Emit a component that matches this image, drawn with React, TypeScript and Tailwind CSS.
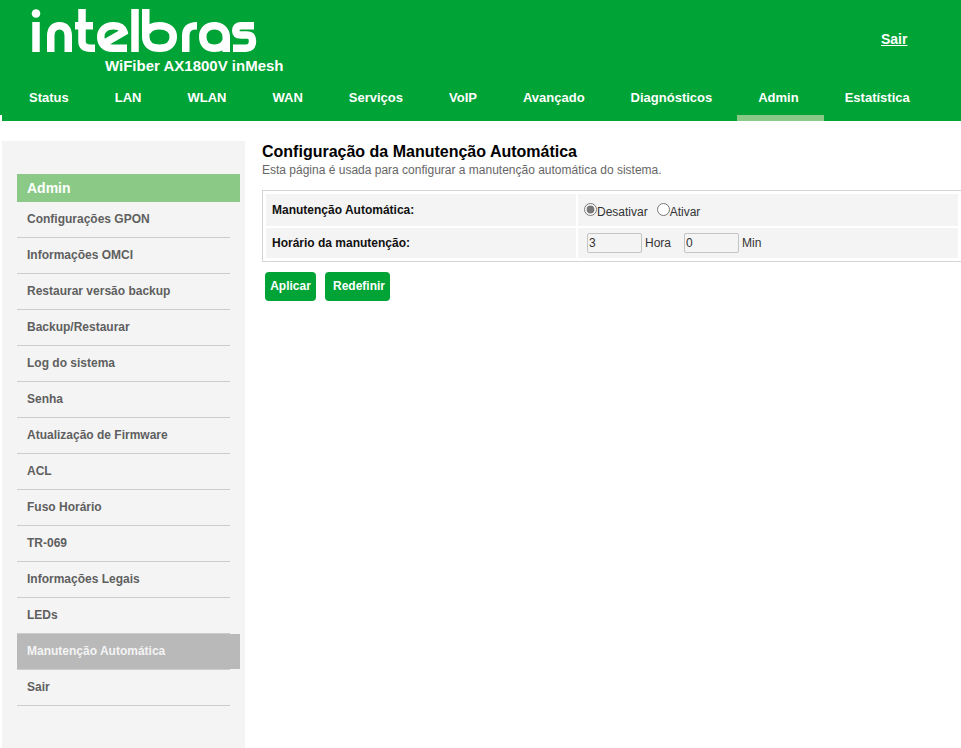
const tabs = ['Status', 'LAN', 'WLAN', 'WAN', 'Serviços', 'VoIP', 'Avançado', 'Diagnósticos', 'Admin', 'Estatística'];

const menu = [
  'Configurações GPON',
  'Informações OMCI',
  'Restaurar versão backup',
  'Backup/Restaurar',
  'Log do sistema',
  'Senha',
  'Atualização de Firmware',
  'ACL',
  'Fuso Horário',
  'TR-069',
  'Informações Legais',
  'LEDs',
  'Manutenção Automática',
  'Sair',
];

function Logo() {
  return (
    <svg width="232" height="46" viewBox="0 0 232 46" fill="none" stroke="#fff" strokeWidth="7.5" className="block">
      <circle cx="7" cy="5.5" r="4.3" fill="#fff" stroke="none" />
      <path d="M7 14V44" />
      <path d="M21.75 44V28C21.75 21 25 17.75 30.5 17.75C36 17.75 39.25 21 39.25 28V44" />
      <path d="M53 1V33C53 38 56 40.25 62 40.25H66" />
      <path d="M46 17.75H64" />
      <path d="M98 40.25H84C75 40.25 71.75 35 71.75 29C71.75 22 77 17.75 84 17.75C90 17.75 94 20 95 24L74 36" />
      <path d="M106 1V44" />
      <path d="M116.75 1V29C116.75 36 122 40.25 130.5 40.25C139 40.25 144.25 36 144.25 29C144.25 22 139 17.75 130.5 17.75C124 17.75 120 20 118 24" />
      <path d="M156.75 44V28C156.75 21 160 17.75 168 17.75" />
      <path d="M197.25 44V29C197.25 22 192 17.75 185.5 17.75C178 17.75 173.75 22 173.75 29C173.75 36 178 40.25 185.5 40.25C191 40.25 195 38 197 33" />
      <path d="M225 17.75H212C208.5 17.75 206.75 19.5 206.75 22.5C206.75 25.5 208.5 27 212 27H218C222 27 223.5 29.5 223.5 33.5C223.5 38 221 40.25 217 40.25H204" />
    </svg>
  );
}

export default function App() {
  return (
    <div className="h-[748px] w-[961px] overflow-hidden bg-white font-['Liberation_Sans',Arial,sans-serif]">
      <header className="relative h-[121px] bg-[#00a335] text-white">
        <div className="relative h-[74px]">
          <div className="absolute left-[29px] top-[8px]">
            <Logo />
          </div>
          <div className="absolute left-[105px] top-[57px] text-[15px] leading-[18px] font-bold">WiFiber AX1800V inMesh</div>
          <a className="absolute left-[881px] top-[30px] text-sm leading-[18px] font-bold underline">Sair</a>
        </div>
        <nav className="flex h-[47px] pl-[8px]">
          {tabs.map((t) => (
            <div
              key={t}
              className={`h-[47px] pr-[25px] pl-[21px] pt-[16px] text-[13px] leading-[16px] font-bold ${t === 'Admin' ? 'border-b-[6px] border-[#8aca86]' : ''}`}
            >
              {t}
            </div>
          ))}
        </nav>
        <div className="absolute bottom-0 left-0 h-[6px] w-[2px] bg-white" />
      </header>

      <div className="flex">
        <aside className="ml-[2px] mt-[20px] h-[607px] w-[243px] shrink-0 bg-[#f4f4f4] pl-[15px] pt-[33px]">
          <div className="h-[28px] w-[223px] bg-[#8aca86] pl-[10px] text-sm leading-[28px] font-bold text-white">Admin</div>
          <ul>
            {menu.map((m) => {
              const active = m === 'Manutenção Automática';
              return (
                <li key={m} className="relative h-[36px] w-[213px] border-b border-[#cccccc]">
                  {active && <div className="absolute left-0 top-0 h-[35px] w-[223px] bg-[#b9b9b9]" />}
                  <span className={`relative block pl-[10px] text-xs leading-[34px] font-bold ${active ? 'text-[#f4f4f4]' : 'text-[#5f5f5f]'}`}>{m}</span>
                </li>
              );
            })}
          </ul>
        </aside>

        <main className="ml-[17px] min-w-0 flex-1 pt-[21px]">
          <h1 className="text-base leading-[20px] font-bold text-black">Configuração da Manutenção Automática</h1>
          <p className="text-xs leading-[16px] text-[#666666]">Esta página é usada para configurar a manutenção automática do sistema.</p>

          <div className="mt-[12px] w-[703px] border-y border-l border-[#d4d4d4] pt-[3px] pb-[3px] pl-[3px]">
            <div className="flex h-[32px] gap-[2px] text-xs">
              <div className="w-[310px] bg-[#f4f4f4] pl-[6px] leading-[32px] font-bold text-[#111111]">Manutenção Automática:</div>
              <div className="flex w-[380px] items-center bg-[#f4f4f4] pl-[6px] text-[#333333]">
                <input type="radio" readOnly checked name="m" className="m-0 mb-[1px] h-[13px] w-[13px] accent-[#777777]" />
                <span className="mr-[9px] mt-[4px]">Desativar</span>
                <input type="radio" readOnly name="m" className="m-0 mb-[1px] h-[13px] w-[13px]" />
                <span className="mt-[4px]">Ativar</span>
              </div>
            </div>
            <div className="mt-[2px] flex h-[30px] gap-[2px] text-xs">
              <div className="w-[310px] bg-[#f4f4f4] pl-[6px] leading-[30px] font-bold text-[#111111]">Horário da manutenção:</div>
              <div className="flex w-[380px] items-center bg-[#f4f4f4] pl-[9px] text-[#333333]">
                <input readOnly value="3" className="h-[20px] w-[55px] rounded-[2px] border border-[#c4c4c4] bg-[#f4f4f4] px-[1px] text-xs" />
                <span className="ml-[3px] w-[26px]">Hora</span>
                <input readOnly value="0" className="ml-[13px] h-[20px] w-[55px] rounded-[2px] border border-[#c4c4c4] bg-[#f4f4f4] px-[1px] text-xs" />
                <span className="ml-[3px]">Min</span>
              </div>
            </div>
          </div>

          <div className="mt-[10px] ml-[3px] flex gap-[9px] text-xs font-bold text-white">
            <button className="h-[29px] w-[51px] rounded-[4px] bg-[#00a335] pb-[2px]">Aplicar</button>
            <button className="h-[29px] w-[65px] rounded-[4px] bg-[#00a335] pb-[2px] pl-[3px]">Redefinir</button>
          </div>
        </main>
      </div>
    </div>
  );
}
